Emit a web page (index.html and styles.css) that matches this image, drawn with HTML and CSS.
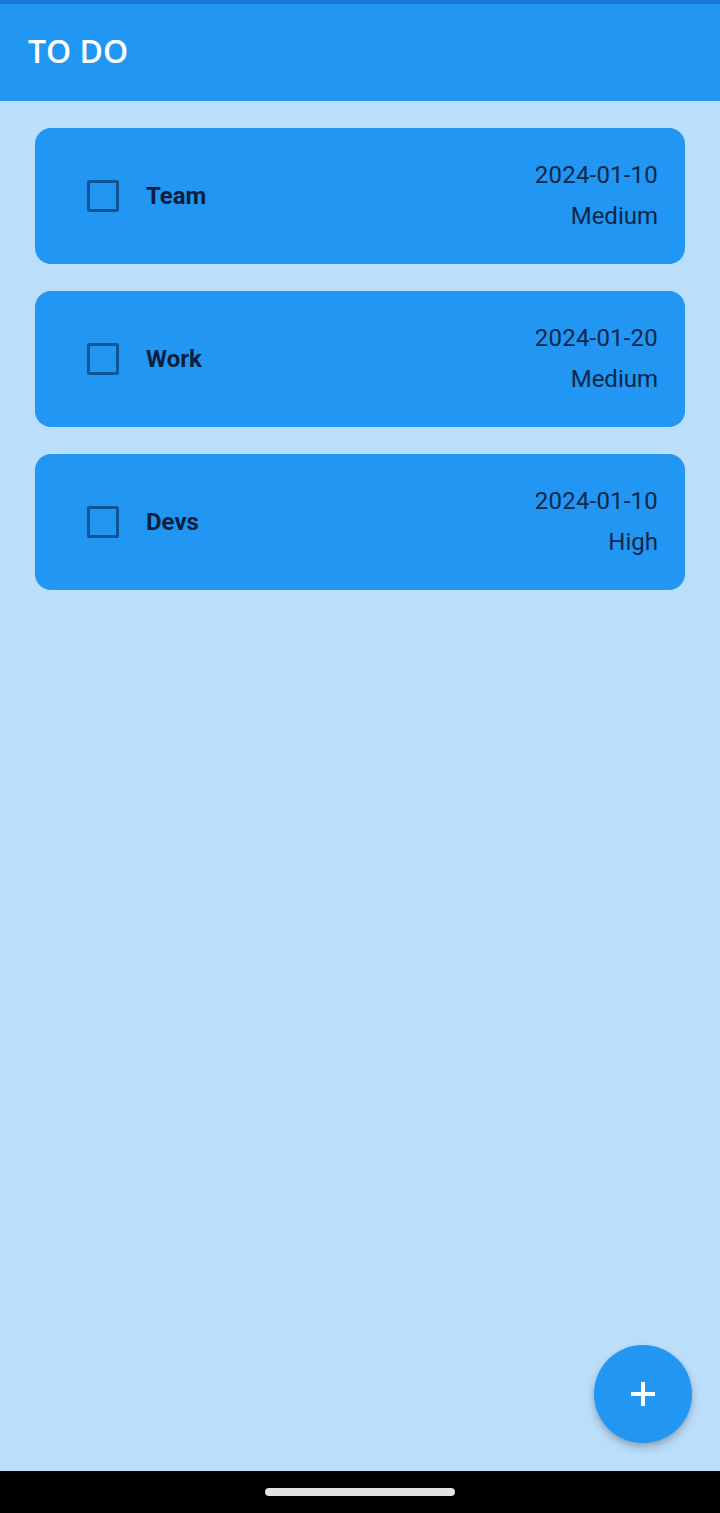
FILE: index.html
```html
<!DOCTYPE html>
<html lang="en">
<head>
<meta charset="utf-8">
<title>TO DO</title>
<link rel="stylesheet" href="styles.css">
</head>
<body>
<div class="screen">
  <div class="status-strip"></div>
  <header class="app-bar">
    <h1 class="app-title">TO DO</h1>
  </header>
  <main class="content">
    <div class="task-card">
      <div class="task-left">
        <span class="checkbox"></span>
        <span class="task-title">Team</span>
      </div>
      <div class="task-right">
        <span class="task-date">2024-01-10</span>
        <span class="task-priority">Medium</span>
      </div>
    </div>
    <div class="task-card">
      <div class="task-left">
        <span class="checkbox"></span>
        <span class="task-title">Work</span>
      </div>
      <div class="task-right">
        <span class="task-date">2024-01-20</span>
        <span class="task-priority">Medium</span>
      </div>
    </div>
    <div class="task-card">
      <div class="task-left">
        <span class="checkbox"></span>
        <span class="task-title">Devs</span>
      </div>
      <div class="task-right">
        <span class="task-date">2024-01-10</span>
        <span class="task-priority">High</span>
      </div>
    </div>
    <button class="fab" aria-label="Add">
      <svg width="28" height="28" viewBox="0 0 28 28"><path d="M14 2v24M2 14h24" stroke="#fff" stroke-width="4" fill="none"/></svg>
    </button>
  </main>
  <div class="nav-bar"><span class="home-indicator"></span></div>
</div>
</body>
</html>
```
FILE: styles.css
```css
* { box-sizing: border-box; }
html, body { margin: 0; padding: 0; }
body {
  font-family: Roboto, "Noto Sans", sans-serif;
  background: #BBDEFB;
}
.screen {
  width: 720px;
  height: 1513px;
  display: flex;
  flex-direction: column;
}
.status-strip {
  height: 4px;
  background: #1976D2;
}
.app-bar {
  height: 97px;
  background: #2196F3;
  display: flex;
  align-items: center;
  padding-left: 28px;
}
.app-title {
  margin: 0;
  color: #fff;
  font-family: "Open Sans", "Noto Sans", sans-serif;
  font-size: 32px;
  font-weight: 600;
  line-height: 40px;
  letter-spacing: 0;
  padding-bottom: 3px;
}
.content {
  flex: 1;
  position: relative;
  padding: 27px 35px 0 35px;
  display: flex;
  flex-direction: column;
  gap: 27px;
  background: #BBDEFB;
}
.task-card {
  height: 136px;
  background: #2196F3;
  border-radius: 16px;
  display: flex;
  align-items: center;
  justify-content: space-between;
  padding: 0 27px 0 52px;
}
.task-left {
  display: flex;
  align-items: center;
  gap: 27px;
}
.checkbox {
  width: 32px;
  height: 32px;
  border: 3.5px solid #0f5495;
  border-radius: 2px;
}
.task-title {
  font-size: 24px;
  font-weight: 700;
  color: #0c1f3d;
}
.task-right {
  display: flex;
  flex-direction: column;
  align-items: flex-end;
  gap: 13px;
  color: #0f2748;
  font-size: 24px;
  line-height: 28px;
  padding-bottom: 2px;
}
.task-date { letter-spacing: 0.2px; }
.fab {
  position: absolute;
  right: 28px;
  bottom: 28px;
  width: 98px;
  height: 98px;
  border-radius: 50%;
  border: none;
  background: #2196F3;
  box-shadow: 0 5px 10px rgba(0, 0, 0, 0.18), 0 2px 4px rgba(0,0,0,0.12);
  display: flex;
  align-items: center;
  justify-content: center;
  padding: 0;
}
.nav-bar {
  height: 42px;
  background: #000;
  display: flex;
  justify-content: center;
  padding-top: 17px;
}
.home-indicator {
  width: 190px;
  height: 8px;
  border-radius: 4px;
  background: #e2e2e2;
}
```
